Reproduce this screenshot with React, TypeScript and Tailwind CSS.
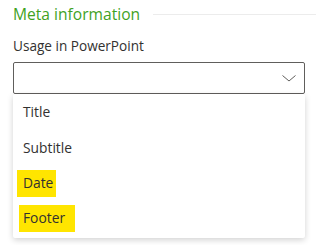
export default function App() {
  const items = ["Title", "Subtitle", "Date", "Footer"];

  return (
    <div className="w-[316px] h-[245px] bg-white overflow-hidden font-['Open_Sans',sans-serif] text-[#323130]">
      {/* Section header */}
      <div className="flex items-center pl-[13px] pt-[3px] h-[25px]">
        <h2 className="text-[15.6px] leading-[22px] text-[#3fa21f] font-normal whitespace-nowrap">Meta information</h2>
        <div className="flex-1 h-px bg-[#ececec] ml-[13px]" />
      </div>

      <div className="pl-[13px] pr-[11px]">
        <label className="block mt-[11px] text-[13.6px] leading-[20px]">Usage in PowerPoint</label>

        {/* Select */}
        <div className="mt-[6px] h-[32px] border border-[#605e5c] rounded-[2px] flex items-center justify-end pr-[8px]">
          <svg width="14" height="7" viewBox="0 0 14 7" fill="none">
            <path d="M0.5 0.5 L7 6 L13.5 0.5" stroke="#605e5c" strokeWidth="1" />
          </svg>
        </div>

        {/* Options */}
        <div className="bg-white shadow-[0_2px_6px_rgba(0,0,0,0.18)] rounded-[2px]">
          {items.map((item) => (
            <div key={item} className="h-[36px] flex items-center pl-[10px] text-[13.8px]">
              {item === "Date" && (
                <span className="-ml-[6px] pl-[6px] pr-[3px] h-[27px] -mt-[1px] flex items-center bg-[#ffe500]">{item}</span>
              )}
              {item === "Footer" && (
                <span className="-ml-[4px] pl-[4px] pr-[10px] h-[27px] -mt-[3px] flex items-center bg-[#ffe500]">{item}</span>
              )}
              {item !== "Date" && item !== "Footer" && item}
            </div>
          ))}
        </div>
      </div>
    </div>
  );
}
